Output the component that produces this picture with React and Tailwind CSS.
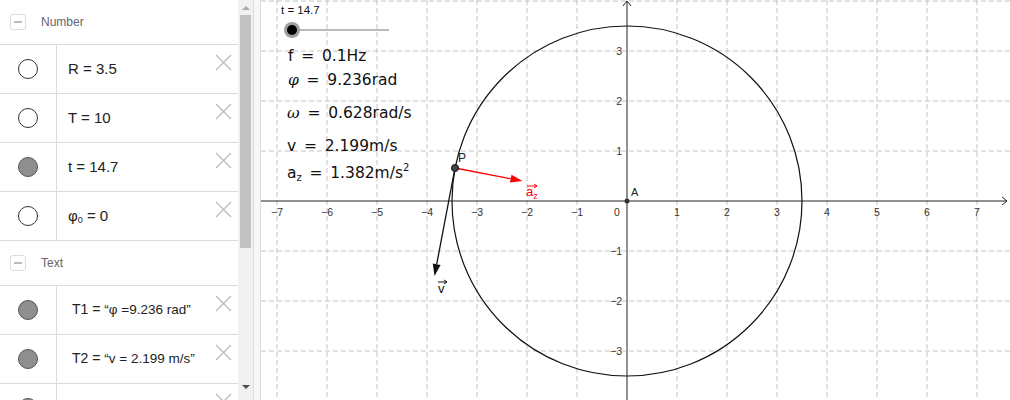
import React from "react";

const numberRows = [
  { label: "R = 3.5", filled: false },
  { label: "T = 10", filled: false },
  { label: "t = 14.7", filled: true },
  { label: "φ0", filled: false, phi: true },
];

const textRows = [
  { name: "T1", value: "“φ =9.236 rad”", filled: true },
  { name: "T2", value: "“v = 2.199 m/s”", filled: true },
  { name: "", value: "", filled: true },
];

function CloseIcon() {
  return (
    <svg width="17" height="17" viewBox="0 0 17 17">
      <path d="M1 1 L16 16 M16 1 L1 16" stroke="#bdbdbd" strokeWidth="1.4" fill="none" />
    </svg>
  );
}

function Dot({ filled }) {
  return (
    <div
      className={`w-[20px] h-[20px] rounded-full border-[1.5px] ${
        filled ? "bg-[#8f8f8f] border-[#555]" : "bg-white border-[#333]"
      }`}
    />
  );
}

function GroupHeader({ title, h }) {
  return (
    <div className={`flex items-center gap-[15px] pl-[10px] border-b border-[#dcdcdc] shrink-0 ${h}`}>
      <div className="w-[16px] h-[16px] rounded-[3px] border border-[#dcdcdc] flex items-center justify-center">
        <div className="w-[8px] h-[1.5px] bg-[#bbb]" />
      </div>
      <span className="text-[12px] text-[#666]">{title}</span>
    </div>
  );
}

function Row({ filled, children }) {
  return (
    <div className="flex h-[49px] border-b border-[#dcdcdc] shrink-0">
      <div className="w-[57px] border-r border-[#dcdcdc] flex items-center justify-center">
        <Dot filled={filled} />
      </div>
      <div className="flex-1 flex items-center pl-[11px] text-[#222]">{children}</div>
      <div className="pt-[9px] pr-[6px]">
        <CloseIcon />
      </div>
    </div>
  );
}

function Graphics() {
  const xs = [];
  for (let k = -7; k <= 7; k++) xs.push(k);
  const ys = [-4, -3, -2, -1, 1, 2, 3, 4];
  const font = "'Liberation Sans', Arial, sans-serif";
  const math = "'DejaVu Sans', sans-serif";
  return (
    <svg width="749" height="400" viewBox="261 0 749 400" className="block">
      {/* grid */}
      {xs
        .filter((k) => k !== 0)
        .map((k) => (
          <line key={"gx" + k} x1={627 + 50 * k} y1="0" x2={627 + 50 * k} y2="400" stroke="#c4c4c4" strokeDasharray="5 3" />
        ))}
      {ys.map((k) => (
        <line key={"gy" + k} x1="261" y1={201 - 50 * k} x2="1010" y2={201 - 50 * k} stroke="#c4c4c4" strokeDasharray="5 3" />
      ))}

      {/* axes */}
      <line x1="261" y1="201" x2="1007" y2="201" stroke="#252525" strokeWidth="1" />
      <path d="M1002 197 L1007 201 L1002 205" stroke="#252525" fill="none" />
      <line x1="627" y1="1" x2="627" y2="400" stroke="#252525" strokeWidth="1" />
      <path d="M623 6 L627 1 L631 6" stroke="#252525" fill="none" />

      {/* tick labels */}
      <g fontFamily={font} fontSize="10.5" fill="#333">
        {xs
          .filter((k) => k !== 0)
          .map((k) => (
            <text key={"lx" + k} x={627 + 50 * k} y="216" textAnchor="middle">
              {k < 0 ? "−" + -k : k}
            </text>
          ))}
        <text x="617" y="216" textAnchor="middle">0</text>
        {[-3, -2, -1, 1, 2, 3].map((k) => (
          <text key={"ly" + k} x="622" y={205 - 50 * k} textAnchor="end">
            {k < 0 ? "−" + -k : k}
          </text>
        ))}
      </g>

      {/* circle */}
      <circle cx="627" cy="201" r="175" fill="none" stroke="#111" strokeWidth="1.2" />

      {/* velocity vector */}
      <line x1="455" y1="168" x2="436.7" y2="264.2" stroke="#111" strokeWidth="1.3" />
      <path d="M434.5 276 L440.6 264.9 L432.8 263.5 Z" fill="#111" />

      {/* acceleration vector */}
      <line x1="455" y1="168" x2="510.7" y2="178.7" stroke="#ff0000" strokeWidth="1.3" />
      <path d="M522.5 181 L509.9 182.6 L511.5 174.8 Z" fill="#ff0000" />

      {/* points */}
      <circle cx="455" cy="168" r="3.5" fill="#444" stroke="#111" />
      <text x="458" y="162" fontFamily={font} fontSize="12" fill="#222">P</text>
      <circle cx="627" cy="201" r="2.5" fill="#333" />
      <text x="631" y="196" fontFamily={font} fontSize="11" fill="#222">A</text>

      {/* vector labels */}
      <text x="526" y="196" fontFamily={font} fontSize="13" fill="#ff0000">
        a<tspan fontSize="9" dy="3">z</tspan>
      </text>
      <path d="M527 186 L537 186 M534 184 L537 186 L534 188" stroke="#ff0000" fill="none" strokeWidth="1" />
      <text x="438" y="293" fontFamily={font} fontSize="13" fill="#111">v</text>
      <path d="M438 282 L447 282 M444 280 L447 282 L444 284" stroke="#111" fill="none" strokeWidth="1" />

      {/* slider */}
      <text x="281" y="14" fontFamily={font} fontSize="11.5" fill="#111">t = 14.7</text>
      <line x1="292" y1="30" x2="389" y2="30" stroke="#777" strokeWidth="1" />
      <circle cx="292" cy="30" r="8" fill="#a0a0a0" />
      <circle cx="292" cy="30" r="5" fill="#000" />

      {/* formulas */}
      <g fontFamily={math} fontSize="15.5" fill="#111">
        <text x="288" y="61">f{"\u2002=\u2002"}0.1Hz</text>
        <text x="288" y="85">
          <tspan fontStyle="italic" fontFamily="'DejaVu Serif', serif">φ</tspan>
          {"\u2002=\u2002"}9.236rad
        </text>
        <text x="287" y="118">
          <tspan fontStyle="italic" fontFamily="'DejaVu Serif', serif">ω</tspan>
          {"\u2002=\u2002"}0.628rad/s
        </text>
        <text x="287" y="151">v{"\u2002=\u2002"}2.199m/s</text>
        <text x="287" y="178">
          a<tspan fontSize="10" dy="3">z</tspan>
          <tspan dy="-3">{"\u2002=\u2002"}1.382m/s</tspan>
          <tspan fontSize="10" dy="-7">2</tspan>
        </text>
      </g>
    </svg>
  );
}

export default function App() {
  return (
    <div
      className="flex w-[1010px] h-[400px] overflow-hidden bg-white"
      style={{ fontFamily: "'Liberation Sans', Arial, sans-serif" }}
    >
      {/* Algebra view */}
      <div className="w-[238px] h-[400px] flex flex-col overflow-hidden">
        <GroupHeader title="Number" h="h-[45px]" />
        {numberRows.map((r) => (
          <Row key={r.label} filled={r.filled}>
            {r.phi ? (
              <span className="text-[15px]">
                φ<sub className="text-[9px]">0</sub> = 0
              </span>
            ) : (
              <span className="text-[15px]">{r.label}</span>
            )}
          </Row>
        ))}
        <GroupHeader title="Text" h="h-[45px]" />
        {textRows.map((r, i) => (
          <Row key={i} filled={r.filled}>
            {r.name && (
              <span className="pl-[4px] text-[14px] whitespace-pre">
                {r.name} = <span className="text-[13.5px]">{r.value}</span>
              </span>
            )}
          </Row>
        ))}
      </div>

      {/* Scrollbar */}
      <div className="w-[15px] h-[400px] bg-[#f1f1f1] flex flex-col items-center shrink-0">
        <div className="h-[15px] flex items-center justify-center">
          <div className="w-0 h-0 border-l-[4px] border-r-[4px] border-b-[4px] border-l-transparent border-r-transparent border-b-[#a8a8a8]" />
        </div>
        <div className="w-[11px] h-[233px] bg-[#c1c1c1]" />
        <div className="flex-1" />
        <div className="h-[18px] flex items-start pt-[3px] justify-center">
          <div className="w-0 h-0 border-l-[4px] border-r-[4px] border-t-[4px] border-l-transparent border-r-transparent border-t-[#505050]" />
        </div>
      </div>

      {/* Splitter */}
      <div className="w-[8px] h-[400px] border-l border-r border-[#dcdcdc] bg-[#f7f7f7] shrink-0" />

      {/* Graphics view */}
      <Graphics />
    </div>
  );
}
